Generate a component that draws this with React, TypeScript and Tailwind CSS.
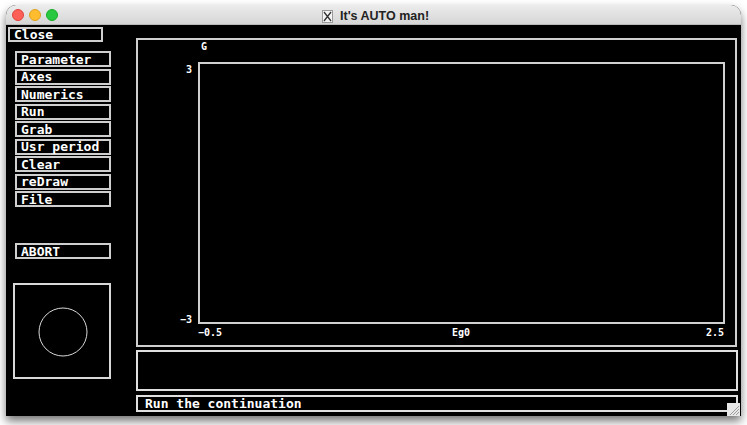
import React from 'react';

const mono = "font-['DejaVu_Sans_Mono',monospace] font-bold text-[13px] leading-none text-white";

const menuItems = ['Parameter', 'Axes', 'Numerics', 'Run', 'Grab', 'Usr period', 'Clear', 'reDraw', 'File'];

function XButton({ label, className }: { label: string; className: string }) {
  return (
    <div className={`border-2 border-[#cfcfcf] flex items-center pl-[4px] ${className}`}>
      <span className={mono}>{label}</span>
    </div>
  );
}

function TitleBar() {
  return (
    <div className="h-[20px] flex items-center bg-gradient-to-b from-[#ececec] to-[#d6d6d6] border-b border-[#b9b9b9] relative">
      <div className="flex items-center gap-[5px] pl-[6px]">
        <span className="w-[12px] h-[12px] rounded-full bg-[#fe5f57] border border-[#e0443e]" />
        <span className="w-[12px] h-[12px] rounded-full bg-[#febc2e] border border-[#dea123]" />
        <span className="w-[12px] h-[12px] rounded-full bg-[#28c840] border border-[#1aab29]" />
      </div>
      <div className="absolute left-[316px] top-[2px] flex items-center gap-[7px]">
        <svg width="11" height="13" viewBox="0 0 11 13">
          <rect x="0.5" y="0.5" width="10" height="12" fill="#f4f4f4" stroke="#9a9a9a" />
          <path d="M2 2 L9 11 M9 2 L2 11" stroke="#333" strokeWidth="1.3" />
        </svg>
        <span className="font-['Liberation_Sans',sans-serif] font-bold text-[12.5px] text-[#222]">It's AUTO man!</span>
      </div>
    </div>
  );
}

function Plot() {
  const t = { fill: '#ffffff', fontFamily: 'DejaVu Sans Mono, monospace', fontWeight: 700, fontSize: 10 };
  return (
    <svg width="597" height="305" className="block">
      <rect x="61" y="23" width="525" height="260" fill="none" stroke="#d0d0d0" strokeWidth="2" />
      <text x="63" y="10" {...t}>G</text>
      <text x="54" y="33" textAnchor="end" {...t}>3</text>
      <text x="54" y="283" textAnchor="end" {...t}>−3</text>
      <text x="60" y="296" {...t}>−0.5</text>
      <text x="314" y="296" {...t}>Eg0</text>
      <text x="586" y="296" textAnchor="end" {...t}>2.5</text>
    </svg>
  );
}

export default function App() {
  return (
    <div className="w-[747px] h-[425px] bg-white overflow-hidden pt-[5px] pl-[6px]">
      <div className="w-[735px] h-[411px] rounded-t-[10px] overflow-hidden shadow-[0_5px_10px_rgba(0,0,0,0.55)] bg-black relative">
        <TitleBar />
        <div className="flex h-[391px] bg-black">
          {/* left control column */}
          <div className="w-[130px] flex flex-col">
            <XButton label="Close" className="mt-[2px] ml-[2px] w-[95px] h-[15px] pl-[3px]" />
            <div className="mt-[9px] ml-[9px] flex flex-col gap-[1.5px]">
              {menuItems.map((m) => (
                <XButton key={m} label={m} className="w-[96px] h-[16px]" />
              ))}
            </div>
            <XButton label="ABORT" className="mt-[36px] ml-[9px] w-[96px] h-[16px]" />
            <div className="mt-[24px] ml-[7px] w-[98px] h-[96px] border-2 border-[#d8d8d8]">
              <svg width="94" height="92" className="block">
                <circle cx="48" cy="47" r="24" fill="none" stroke="#d8d8d8" strokeWidth="1" />
              </svg>
            </div>
          </div>

          {/* right: graph, message, status */}
          <div className="flex flex-col">
            <div className="mt-[13px] w-[601px] h-[309px] border-2 border-[#cfcfcf]">
              <Plot />
            </div>
            <div className="mt-[3px] w-[602px] h-[41px] border-2 border-[#e0e0e0]" />
            <div className="mt-[4px] w-[602px] h-[17px] border-2 border-[#e0e0e0] flex items-center pl-[7px]">
              <span className={mono}>Run the continuation</span>
            </div>
          </div>
        </div>
        {/* resize grip */}
        <div className="absolute right-[1px] bottom-[0px] w-[13px] h-[13px] bg-[#e8e8e8]">
          <svg width="13" height="13" className="block">
            <path d="M3 12 L12 3 M6 12 L12 6 M9 12 L12 9" stroke="#9c9c9c" strokeWidth="1" />
          </svg>
        </div>
      </div>
    </div>
  );
}
